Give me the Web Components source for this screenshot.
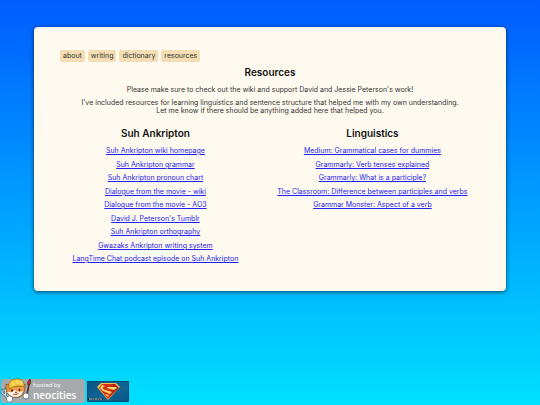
<!DOCTYPE html>
<html lang="en">
<head>
<meta charset="utf-8">
<meta name="viewport" content="width=device-width, initial-scale=1">
<title>Resources</title>
<style>
html { min-height: 100%; background: linear-gradient(#005cff, #00e0ff) no-repeat; }
body { margin: 0; font: 7px/8px Inter, "Open Sans", sans-serif; color: #333; }
</style>
</head>
<body>
<resource-page></resource-page>
<script>
const define = (name, html) => {
  const template = document.createElement('template');
  template.innerHTML = html;
  customElements.define(name, class extends HTMLElement {
    constructor() {
      super();
      this.attachShadow({ mode: 'open' }).append(template.content.cloneNode(true));
    }
  });
};

define('nav-bar', `
<style>
:host { display: block; }
nav { display: flex; gap: 3px; }
a { padding: 2px 3px; border-radius: 2px; background: #f5deb3; color: #333; text-decoration: none; }
</style>
<nav><a href="#about">about</a><a href="#writing">writing</a><a href="#dictionary">dictionary</a><a href="#resources">resources</a></nav>`);

customElements.define('link-column', class extends HTMLElement {
  constructor() {
    super();
    this.attachShadow({ mode: 'open' }).innerHTML = `
<style>
:host { display: block; text-align: center; }
h2 { margin: 0 0 7px; font-size: 10px; line-height: 14px; font-weight: 600; color: #111; }
::slotted(a) { display: block; width: fit-content; margin: 0 auto 6px; color: #22e; }
::slotted(a:nth-child(even)) { margin-bottom: 5px; }
</style>
<h2></h2><div><slot></slot></div>`;
  }
  connectedCallback() {
    this.shadowRoot.querySelector('h2').textContent = this.getAttribute('heading');
  }
});

define('neocities-badge', `
<style>
:host { display: block; }
a { display: flex; align-items: center; height: 24px; width: 84px; box-sizing: border-box; border-radius: 3px; background: #a6aaac; color: #fff; text-decoration: none; }
svg { width: 32px; height: 24px; flex: none; overflow: visible; }
span { display: flex; flex-direction: column; font-family: "Open Sans", sans-serif; }
small { font-size: 6px; line-height: 7px; }
b { font-size: 11px; line-height: 12px; font-weight: 600; font-family: "Open Sans", sans-serif; font-size: 10px; }
</style>
<a href="#neocities">
<svg viewBox="0 0 32 24" aria-hidden="true">
 <path d="M1 11v3l3 2 3 4M4 10l1 4-1 2" fill="none" stroke="#3a6c85" stroke-width="2.4" stroke-linecap="round"/>
 <path d="M1 11v3l3 2 3 4M4 10l1 4-1 2" fill="none" stroke="#cfe6ef" stroke-width="1.1" stroke-linecap="round"/>
 <path d="M5 5c0 4 0 8 3 11 4 4 12 3 14-1 2-3 2-6 2-10l-4 2H9z" fill="#f09a45" stroke="#6d3f18" stroke-width=".7"/>
 <path d="M6 13c3 0 5 1 8-2 2 2 5 2 8 1-1 7-12 8-16 1z" fill="#fff6e6"/>
 <path d="M8 8C7 3 11 0 16 0c4 0 7 2 7 6l1 2c-5-2-11-1-16 2z" fill="#f6c83e" stroke="#9b721a" stroke-width=".8"/>
 <path d="m11 3 2 3M16 1l1 4M20 2v4" stroke="#fff19a" stroke-width="1.1"/>
 <ellipse cx="11" cy="11.500" rx=".9" ry="1.3" fill="#402b21"/><ellipse cx="18.500" cy="11" rx=".9" ry="1.3" fill="#402b21"/>
 <path d="M14 13h2l-1 1zM12 15q3 2 6-1" fill="#de7669" stroke="#7b3c24" stroke-width=".6"/>
 <path d="m28 5-2 11" stroke="#5c2e2a" stroke-width="1.6"/>
 <path d="M27 6c-1-2 0-4 2-6 1 3 1 5-1 6z" fill="#b8323a" stroke="#442323" stroke-width=".8"/>
 <circle cx="8.500" cy="20" r="3.200" fill="#fff" stroke="#3a6275" stroke-width=".7"/><circle cx="25" cy="17" r="3" fill="#fff" stroke="#3a6275" stroke-width=".7"/>
</svg>
<span><small>hosted by</small><b>neocities</b></span>
</a>`);

define('hero-badge', `
<style>
:host { display: block; }
a, svg { display: block; }
svg { width: 42px; height: 21px; }
</style>
<a href="#superman" aria-label="Superman">
<svg viewBox="0 0 42 21" aria-hidden="true">
 <defs>
  <linearGradient id="sky" x2="1" y2="1"><stop stop-color="#075584"/><stop offset=".6" stop-color="#116494"/><stop offset="1" stop-color="#08547e"/></linearGradient>
  <linearGradient id="red" x2="1"><stop stop-color="#c8280f"/><stop offset=".5" stop-color="#d8360f"/><stop offset="1" stop-color="#97140e"/></linearGradient>
 </defs>
 <path d="M0 0h42v21H0z" fill="url(#sky)"/><path d="M.5.5h41v20H.5z" fill="none" stroke="#084d70"/>
 <path d="M14 2h15l4 4-12 13L10 6z" fill="#f3bd50"/>
 <path d="M15 3h13l4 4-11 11L12 7z" fill="url(#red)"/>
 <path d="M18 5c-3 1-3 3 0 4l7 2-2 2-7-3-3-3 2-3zM20 6h9l1 1-3 2-7-2zM18 13l4 1-1 2z" fill="#ffd56c"/>
 <path d="M1 17h15v2H1z" fill="#08283f"/><path d="M2 18h3m.5 0h2m.5 0h2m.5 0h2m.5 0h2" stroke="#e2edf0" stroke-width=".9"/>
</svg></a>`);

define('content-card', `
<style>
:host { display: block; padding: 23px 26px 22px; border-radius: 4px; background: #fffaf0; box-shadow: 0 1px 4px rgba(0,0,0,.65); }
</style><slot></slot>`);

define('resource-page', `
<style>
:host { display: flex; flex-direction: column; min-height: 100vh; box-sizing: border-box; padding: 27px 34px 0; }
h1 { margin: 3px 0 7px; text-align: center; font-size: 10px; line-height: 14px; font-weight: 600; color: #111; }
p { margin: 0 0 5px; text-align: center; }
.columns { display: flex; justify-content: space-around; gap: 14px; padding-top: 6px; }
footer { display: flex; align-items: center; gap: 2px; margin: auto -33px 0; padding-bottom: 2px; }
</style>
<content-card>
 <nav-bar></nav-bar>
 <main>
 <h1>Resources</h1>
 <p>Please make sure to check out the wiki and support David and Jessie Peterson's work!</p>
 <p>I've included resources for learning linguistics and sentence structure that helped me with my own understanding.<br>Let me know if there should be anything added here that helped you.</p>
 <div class="columns">
  <link-column heading="Suh Ankripton">
   <a href="#wiki">Suh Ankripton wiki homepage</a>
   <a href="#grammar">Suh Ankripton grammar</a>
   <a href="#pronouns">Suh Ankripton pronoun chart</a>
   <a href="#dialogue-wiki">Dialogue from the movie - wiki</a>
   <a href="#dialogue-ao3">Dialogue from the movie - AO3</a>
   <a href="#tumblr">David J. Peterson's Tumblr</a>
   <a href="#orthography">Suh Ankripton orthography</a>
   <a href="#gwazaks">Gwazaks Ankripton writing system</a>
   <a href="#podcast">LangTime Chat podcast episode on Suh Ankripton</a>
  </link-column>
  <link-column heading="Linguistics">
   <a href="#cases">Medium: Grammatical cases for dummies</a>
   <a href="#tenses">Grammarly: Verb tenses explained</a>
   <a href="#participle">Grammarly: What is a participle?</a>
   <a href="#participles-verbs">The Classroom: Difference between participles and verbs</a>
   <a href="#aspect">Grammar Monster: Aspect of a verb</a>
  </link-column>
 </div>
 </main>
</content-card>
<footer><neocities-badge></neocities-badge><hero-badge></hero-badge></footer>`);
</script>
</body>
</html>
